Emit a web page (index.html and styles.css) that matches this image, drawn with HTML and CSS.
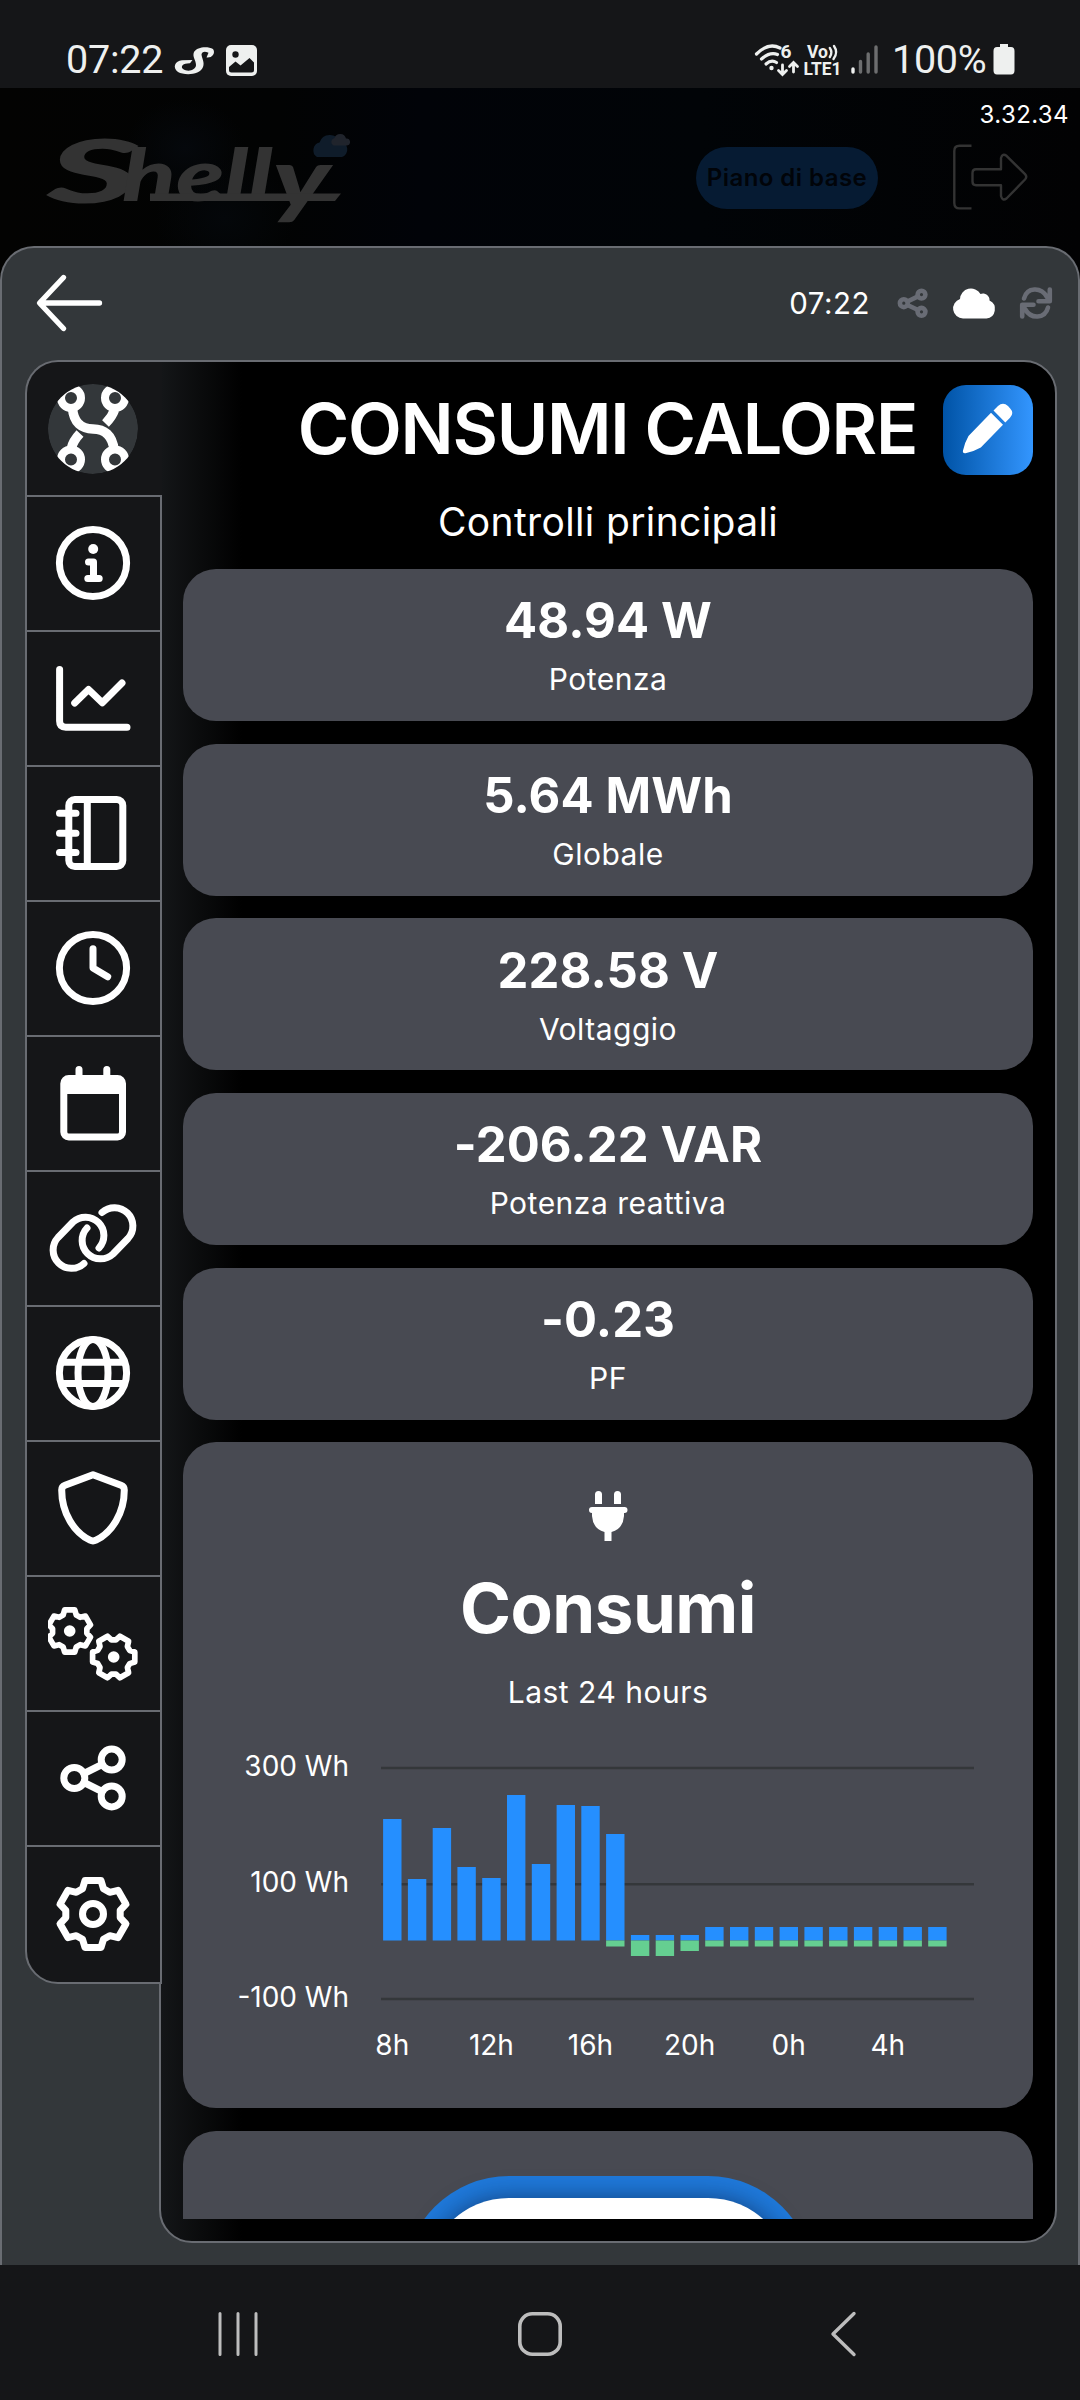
FILE: index.html
```html
<!DOCTYPE html>
<html lang="it">
<head>
<meta charset="utf-8">
<title>Consumi calore</title>
<link rel="stylesheet" href="styles.css">
</head>
<body>
<svg class="defs" width="0" height="0" aria-hidden="true">
  <defs>
    <path id="gear" d="M-10.5-25.3L-8-33.5H8L10.5-25.3L16.7-21.7L25-23.7L33-9.8L27.2-3.6V3.6L33 9.8L25 23.7L16.7 21.7L10.5 25.3L8 33.5H-8L-10.5 25.3L-16.7 21.7L-25 23.7L-33 9.8L-27.2 3.6V-3.6L-33-9.8L-25-23.7L-16.7-21.7Z"/>
    <path id="pill-link" d="M36 70.5A18.4 18.4 0 0 1 10 44.5L25 29A18.4 18.4 0 0 1 51 55"/>
    <clipPath id="disc"><circle cx="45" cy="45" r="45"/></clipPath>
  </defs>
</svg>

<div class="statusbar">
  <span class="status-text clock">07:22</span>
  <svg class="status-left" width="100" height="58" viewBox="170 30 100 58">
    <path d="M213 55Q211 58 206.500 57.500L208.500 52.800Q203 50 201.500 54C201.500 58 205 62 203 67C200 75.500 184 75.500 178 72C172 67.500 175 61 182 60.300L192.500 60L190 63.200C183.500 63 180 66 183 69C188 72.500 196 70 196 65C196 60 192 57 194 52C197 46.500 208 46 213 49Q215 52 213 55Z" fill="#eef0ef"/>
    <rect x="226" y="45" width="31" height="31" rx="5" fill="#eef0ef"/>
    <circle cx="235.500" cy="54.500" r="3.200" fill="#151618"/>
    <path d="M229 67L235.500 61.500L240.500 65.500L249.500 58L254 62.500V70Q254 72.500 251.500 72.500H231.500Q229 72.500 229 70Z" fill="#151618"/>
  </svg>
  <svg class="status-right" width="132" height="58" viewBox="750 30 132 58">
    <g fill="none" stroke="#eef0ef" stroke-width="3.200" stroke-linecap="round">
      <path d="M756.500 54Q768.500 42 780 48"/>
      <path d="M761.500 59Q770 51.500 777.500 54.500"/>
      <path d="M766 64Q771.500 59 776.500 62.500"/>
      <path d="M782.500 65V73.500M778.500 70.500L782.500 74.500L786.500 70.500M793.500 72V63M789.500 66.500L793.500 62.500L797.500 66.500" stroke-width="2.800"/>
      <path d="M829.800 48Q833 52.500 829.800 57M834 46Q838.500 52.500 833.500 59" stroke-width="2.400"/>
    </g>
    <circle cx="771.500" cy="68" r="2.200" fill="#eef0ef"/>
    <g class="status-mini">
      <text x="780.500" y="58" font-size="18" textLength="11" lengthAdjust="spacingAndGlyphs">6</text>
      <text x="807" y="58" font-size="18" textLength="21" lengthAdjust="spacingAndGlyphs">Vo</text>
      <text x="803.500" y="75" font-size="18.500" textLength="38" lengthAdjust="spacingAndGlyphs">LTE1</text>
    </g>
    <g stroke-width="3.400" stroke-linecap="round">
      <path d="M853 69V72" stroke="#eef0ef"/>
      <path d="M860.500 61.500V72M868.200 54V72M876 47V72" stroke="#6d6e6f"/>
    </g>
  </svg>
  <span class="status-text percent">100%</span>
  <svg class="battery" width="22" height="32" viewBox="0 0 22 32"><path d="M7 1H15V4H18Q21.500 4 21.500 8V27.500Q21.500 31.500 18 31.500H4Q.5 31.500 .5 27.500V8Q.5 4 4 4H7Z" fill="#eef0ef"/></svg>
</div>

<header class="header">
  <svg class="brand" width="330" height="152" viewBox="20 96 330 152">
    <g class="brand-text">
      <text x="47" y="203" font-size="87" textLength="92" lengthAdjust="spacingAndGlyphs">S</text>
      <text x="122" y="201" font-size="72" textLength="208" lengthAdjust="spacingAndGlyphs">hell<tspan dy="7" font-size="84">y</tspan></text>
    </g>
    <path d="M150 193.500H341L335 201H150Z" fill="#333"/>
    <path d="M317 157A8 8 0 0 1 319.500 142.500A11 11 0 0 1 340 141.500A8 8 0 0 1 342 157Z" fill="#0f1c2a"/>
    <path d="M333.500 145.500A4 4 0 0 1 334.500 138A6 6 0 0 1 346 138.500A3.500 3.500 0 0 1 347 145.500Z" fill="#20242c"/>
  </svg>
  <span class="plan">Piano di base</span>
  <svg class="exit" width="80" height="72" viewBox="950 141 80 72" fill="none" stroke="#333" stroke-width="2.400" stroke-linejoin="round">
    <path d="M971.500 145.800H959.500Q954.300 145.800 954.300 151V203Q954.300 208.400 959.500 208.400H971.500"/>
    <path d="M976 169.200H1001V158Q1002.500 153 1006.500 155.800L1025 174.200Q1027.500 176.800 1025 179.500L1006.500 198.500Q1002.500 201.500 1001 196V185.200H976Q972.500 185.200 972.500 181.500V173Q972.500 169.200 976 169.200Z"/>
  </svg>
  <span class="version">3.32.34</span>
</header>

<main class="modal">
  <div class="topbar">
    <svg class="back" width="72" height="64" viewBox="34 271 72 64" fill="none" stroke="#fff" stroke-width="5.300" stroke-linecap="round" stroke-linejoin="round"><path d="M63.500 277.500L39.500 303L63.500 328.500M41 303H99.500"/></svg>
    <span class="time">07:22</span>
    <svg class="signals" width="160" height="40" viewBox="895 283 160 40" fill="none" stroke="#696c75" stroke-width="4.600">
      <circle cx="903.800" cy="303.200" r="3.900"/><circle cx="921.500" cy="294.600" r="3.900"/><circle cx="921.500" cy="311.800" r="3.900"/>
      <path d="M908 301.200L917.500 296.600M908 305.200L917.500 309.800"/>
      <path d="M963 318.500A10 10 0 0 1 960 299A11 11 0 0 1 980.500 294A6.500 6.500 0 0 1 989.500 300.500A9.500 9.500 0 0 1 986.500 318.500Z" fill="#fff" stroke="none"/>
      <g stroke-linecap="round" stroke-linejoin="round">
        <path d="M1024 298.500C1027 287 1041 286.500 1047 297M1049.800 289.500V301.200H1038.500"/>
        <path d="M1048 307.500C1045 319 1031 319.500 1025 309M1022.200 316.500V304.800H1033.500"/>
      </g>
    </svg>
  </div>

  <div class="workspace">
    <nav class="sidebar">
      <div class="tab tab-active"><svg viewBox="0 0 90 90"><g clip-path="url(#disc)"><circle cx="45" cy="45" r="45" fill="#33373a"/><g fill="none" stroke="#fff" stroke-width="8"><circle cx="23" cy="14" r="10"/><circle cx="67" cy="14" r="10"/><circle cx="23" cy="75.500" r="10"/><circle cx="67" cy="75.500" r="10"/><path d="M24.500 24C25.500 39 34 45 45 45S64.500 51 66 66M66.500 26Q64 33 57.500 39.500M23.500 64Q25 57 32 49.500" stroke-width="9.500"/></g></g></svg></div>
      <div class="tab"><svg class="line-icon" viewBox="0 0 90 90"><circle cx="45" cy="45" r="33.600"/><path d="M40.500 44H45.500V60.500M39.800 60.500H51.200"/><circle cx="45.200" cy="31" r="5" fill="#fff" stroke="none"/></svg></div>
      <div class="tab"><svg class="line-icon" viewBox="0 0 90 90"><path d="M11.600 16.400V68Q11.600 74.200 17.800 74.200H79M26.700 50L40.500 36.500L54.300 49.800L74 30"/></svg></div>
      <div class="tab"><svg class="line-icon" viewBox="0 0 90 90"><rect x="20.800" y="11.500" width="54" height="67" rx="6"/><path d="M39.300 12V78M11.500 25.300H28M11.500 45.200H28M11.500 64.400H28"/></svg></div>
      <div class="tab"><svg class="line-icon" viewBox="0 0 90 90"><circle cx="45" cy="45" r="33.600"/><path d="M45 25.700V45L59.700 53.800"/></svg></div>
      <div class="tab"><svg class="line-icon" viewBox="0 0 90 90"><rect x="15.800" y="20.500" width="58.700" height="58.500" rx="5"/><path d="M15.800 24H74.500V36H15.800Z" fill="#fff" stroke="none"/><path d="M31 11.500V22M58.800 11.500V22"/></svg></div>
      <div class="tab"><svg class="line-icon" viewBox="0 0 90 90"><use href="#pill-link"/><use href="#pill-link" transform="rotate(180 45 45)"/></svg></div>
      <div class="tab"><svg class="line-icon" viewBox="0 0 90 90"><circle cx="45" cy="45" r="33.600"/><ellipse cx="45" cy="45" rx="15" ry="33.600"/><path d="M14 34.300H76M14 55.600H76"/></svg></div>
      <div class="tab"><svg class="line-icon" viewBox="0 0 90 90"><path d="M45 11.700L73 22.300Q76.300 23.500 76.300 27C76.300 50 64 69.500 48 77.200Q45 78.600 42 77.200C26 69.500 13.700 50 13.700 27Q13.700 23.500 17 22.300Z"/></svg></div>
      <div class="tab"><svg class="line-icon gears" viewBox="0 0 90 90"><use href="#gear" transform="translate(21.700 33) scale(.63)" stroke-width="9"/><use href="#gear" transform="translate(65.700 59) rotate(30) scale(.63)" stroke-width="9"/><g fill="#fff" stroke="none"><circle cx="21.700" cy="33" r="5.800"/><circle cx="65.700" cy="59" r="5.800"/></g></svg></div>
      <div class="tab"><svg class="line-icon" viewBox="0 0 90 90"><circle cx="26.300" cy="45" r="10.500"/><circle cx="63.700" cy="26.600" r="10.500"/><circle cx="63.700" cy="63.400" r="10.500"/><path d="M36 40.500L54 31.500M36 49.500L54 58.500"/></svg></div>
      <div class="tab tab-last"><svg class="line-icon" viewBox="0 0 90 90"><use href="#gear" transform="translate(45 45)"/><circle cx="45" cy="45" r="10.500"/></svg></div>
    </nav>

    <section class="panel">
      <div class="title-row">
        <h1 class="title">CONSUMI CALORE</h1>
        <div class="edit"><svg width="90" height="90" viewBox="0 0 90 90" fill="#fff"><path d="M48 27.700L60 39.700L37.800 62.500Q31 66.500 22.500 68.200Q19.300 68.500 20 65.500Q21.500 58 25.500 51Z"/><path d="M50.500 25.500L55 21Q60 16.500 65 21L67.200 23.500Q71.500 28 67 32.800L62.300 37.500Z"/></svg></div>
      </div>
      <p class="subtitle">Controlli principali</p>
      <div class="cards">
        <div class="card"><strong class="value">48.94 W</strong><span class="label">Potenza</span></div>
        <div class="card"><strong class="value">5.64 MWh</strong><span class="label">Globale</span></div>
        <div class="card"><strong class="value">228.58 V</strong><span class="label">Voltaggio</span></div>
        <div class="card"><strong class="value">-206.22 VAR</strong><span class="label">Potenza reattiva</span></div>
        <div class="card"><strong class="value">-0.23</strong><span class="label">PF</span></div>
        <div class="card chart-card">
          <svg class="plug" width="40" height="50" viewBox="588 1491 40 50" fill="#fff"><path d="M595 1504V1494.500A3.500 3.500 0 0 1 602 1494.500V1504ZM614 1504V1494.500A3.500 3.500 0 0 1 621 1494.500V1504ZM592 1507H624.500A3 3 0 0 1 624.500 1513H624V1516Q623 1529 611.500 1532V1541H604.500V1532Q593 1529 592 1516V1513A3 3 0 0 1 592 1507Z"/></svg>
          <h2 class="chart-title">Consumi</h2>
          <p class="chart-sub">Last 24 hours</p>
          <svg class="chart" width="850" height="397" viewBox="183 1710 850 397">
            <path d="M381 1768H974M381 1884.300H974M381 1999H974" stroke="#34373a" stroke-width="2.600"/>
            <g fill="#258fff">
              <rect x="383.100" y="1819" width="18.400" height="121.500"/>
              <rect x="407.900" y="1879" width="18.400" height="61.500"/>
              <rect x="432.700" y="1828" width="18.400" height="112.500"/>
              <rect x="457.400" y="1867" width="18.400" height="73.500"/>
              <rect x="482.200" y="1878" width="18.400" height="62.500"/>
              <rect x="507" y="1795" width="18.400" height="145.500"/>
              <rect x="531.800" y="1864" width="18.400" height="76.500"/>
              <rect x="556.600" y="1805" width="18.400" height="135.500"/>
              <rect x="581.300" y="1806" width="18.400" height="134.500"/>
              <rect x="606.100" y="1834" width="18.400" height="106.500"/>
              <rect x="630.900" y="1935" width="18.400" height="5.500"/>
              <rect x="655.700" y="1935" width="18.400" height="5.500"/>
              <rect x="680.500" y="1935" width="18.400" height="5.500"/>
              <rect x="705.200" y="1927" width="18.400" height="13.500"/>
              <rect x="730" y="1927" width="18.400" height="13.500"/>
              <rect x="754.800" y="1927" width="18.400" height="13.500"/>
              <rect x="779.600" y="1927" width="18.400" height="13.500"/>
              <rect x="804.400" y="1927" width="18.400" height="13.500"/>
              <rect x="829.100" y="1927" width="18.400" height="13.500"/>
              <rect x="853.900" y="1927" width="18.400" height="13.500"/>
              <rect x="878.700" y="1927" width="18.400" height="13.500"/>
              <rect x="903.500" y="1927" width="18.400" height="13.500"/>
              <rect x="928.200" y="1927" width="18.400" height="13.500"/>
            </g>
            <g fill="#65cf91">
              <rect x="606.100" y="1940.500" width="18.400" height="6"/>
              <rect x="630.900" y="1940.500" width="18.400" height="15.500"/>
              <rect x="655.700" y="1940.500" width="18.400" height="15.500"/>
              <rect x="680.500" y="1940.500" width="18.400" height="10.500"/>
              <rect x="705.200" y="1940.500" width="18.400" height="6"/>
              <rect x="730" y="1940.500" width="18.400" height="6"/>
              <rect x="754.800" y="1940.500" width="18.400" height="6"/>
              <rect x="779.600" y="1940.500" width="18.400" height="6"/>
              <rect x="804.400" y="1940.500" width="18.400" height="6"/>
              <rect x="829.100" y="1940.500" width="18.400" height="6"/>
              <rect x="853.900" y="1940.500" width="18.400" height="6"/>
              <rect x="878.700" y="1940.500" width="18.400" height="6"/>
              <rect x="903.500" y="1940.500" width="18.400" height="6"/>
              <rect x="928.200" y="1940.500" width="18.400" height="6"/>
            </g>
            <g class="axis axis-y">
              <text x="349" y="1775.500">300 Wh</text>
              <text x="349" y="1891.500">100 Wh</text>
              <text x="349" y="2007">-100 Wh</text>
            </g>
            <g class="axis axis-x">
              <text x="392.300" y="2055">8h</text>
              <text x="491.400" y="2055">12h</text>
              <text x="590.500" y="2055">16h</text>
              <text x="689.600" y="2055">20h</text>
              <text x="788.700" y="2055">0h</text>
              <text x="887.800" y="2055">4h</text>
            </g>
          </svg>
        </div>
        <div class="card power-card"><div class="power"><div class="power-face"></div></div></div>
      </div>
    </section>
  </div>
</main>

<footer class="navbar">
  <svg width="46" height="52" viewBox="215 2308 46 52" fill="none" stroke="#bdbdbd" stroke-width="3" stroke-linecap="round"><path d="M220 2313.500V2354.500M238 2313.500V2354.500M256 2313.500V2354.500"/></svg>
  <svg width="52" height="52" viewBox="514 2308 52 52" fill="none" stroke="#bdbdbd" stroke-width="3.600"><rect x="519.800" y="2313.800" width="40.400" height="40.400" rx="12.500"/></svg>
  <svg width="32" height="52" viewBox="827 2308 32 52" fill="none" stroke="#bdbdbd" stroke-width="3.400" stroke-linecap="round" stroke-linejoin="round"><path d="M854 2313.500L833 2334L854 2354.500"/></svg>
</footer>
</body>
</html>
```
FILE: styles.css
```css
* { box-sizing: border-box; }

body {
  margin: 0;
  width: 1080px;
  height: 2400px;
  display: flex;
  flex-direction: column;
  overflow: hidden;
  background: #000;
  color: #fff;
  font-family: Inter, "Liberation Sans", sans-serif;
}

h1, h2, p { margin: 0; }
svg { display: block; flex: none; }
.defs { position: absolute; }

/* System status bar */
.statusbar {
  flex: none;
  height: 88px;
  display: flex;
  align-items: flex-end;
  background: #151618;
  padding-left: 66px;
}
.status-text {
  font: 400 39.5px/57px Roboto, "Liberation Sans", sans-serif;
  color: #eef0ef;
}
.clock { width: 104px; letter-spacing: -.2px; white-space: nowrap; }
.status-right { margin-left: 480px; }
.percent { margin-left: 10px; width: 99px; letter-spacing: -.3px; white-space: nowrap; }
.battery { margin: 0 0 13px 2px; }
.status-mini {
  font-family: Roboto, sans-serif;
  font-weight: 700;
  fill: #eef0ef;
}

/* Dimmed application header */
.header {
  position: relative;
  flex: none;
  height: 192px;
  margin-bottom: -34px;
  display: flex;
  align-items: flex-start;
  padding-left: 20px;
  background:
    radial-gradient(ellipse 60px 50px at 185px 60px, #05080c, transparent),
    radial-gradient(ellipse 70px 60px at 225px 130px, #04070a, transparent),
    linear-gradient(90deg, #030302 0, #020303 280px, #010308 420px, #010407 700px, #020203 1080px);
}
.brand { margin-top: 8px; }
.brand-text {
  font-family: Lato, sans-serif;
  font-weight: 900;
  font-style: italic;
  fill: #333;
}
.plan {
  width: 182px;
  height: 62px;
  margin: 59px 0 0 346px;
  border-radius: 31px;
  background: #061b33;
  color: #010409;
  font-size: 24px;
  font-weight: 600;
  letter-spacing: .45px;
  line-height: 62px;
  text-align: center;
  white-space: nowrap;
}
.exit { margin: 53px 0 0 72px; }
.version {
  position: absolute;
  top: 10px;
  right: 11px;
  font-size: 24px;
  letter-spacing: .4px;
  line-height: 34px;
}

/* Device sheet */
.modal {
  position: relative;
  flex: none;
  height: 2019px;
  display: flex;
  flex-direction: column;
  background: #33373a;
  border: 2px solid #696c72;
  border-bottom: 0;
  border-radius: 34px 34px 0 0;
}
.topbar {
  height: 112px;
  display: flex;
  align-items: center;
  padding: 0 23px 2px 32px;
}
.time { margin: 0 25px 0 auto; font-size: 29.5px; letter-spacing: .5px; }
.workspace {
  display: flex;
  align-items: flex-start;
  padding: 0 21px 0 23px;
}

.sidebar { position: relative; z-index: 1; width: 137px; flex: none; }
.tab {
  height: 135px;
  display: flex;
  align-items: center;
  justify-content: center;
  background: #151618;
  border: 2px solid #696c72;
  border-bottom: 0;
}
.tab svg { width: 90px; height: 90px; margin: -1px 0 0 -1px; }
.tab .gears { margin-left: -2px; }
.tab-active {
  height: 135.3px;
  border-right: 0;
  border-radius: 33px 0 0 0;
}
.tab-active svg { margin: 0 4px 0 0; }
.tab-last {
  height: 138.5px;
  border-bottom: 2px solid #696c72;
  border-radius: 0 0 0 33px;
}
.tab-last svg { margin-top: -2px; }
.line-icon {
  fill: none;
  stroke: #fff;
  stroke-width: 7;
  stroke-linecap: round;
  stroke-linejoin: round;
}

.panel {
  flex: 1;
  min-width: 0;
  height: 1883px;
  margin-left: -3px;
  padding: 23px 22px 22px;
  display: flex;
  flex-direction: column;
  border: 2px solid #696c72;
  border-radius: 0 33px 33px 33px;
  background: linear-gradient(90deg, #141618 0, #000 81px);
}
.title-row {
  flex: none;
  height: 90px;
  display: flex;
  align-items: center;
  justify-content: flex-end;
}
.title {
  padding-bottom: 4px;
  margin-right: 26px;
  font-size: 70px;
  font-weight: 600;
  letter-spacing: -1.3px;
  line-height: 85px;
  white-space: nowrap;
}
.edit {
  width: 90px;
  height: 90px;
  border-radius: 23px;
  background: linear-gradient(90deg, #0053a6, #3396ff);
}
.subtitle {
  flex: none;
  height: 94px;
  font-size: 39px;
  letter-spacing: .36px;
  line-height: 93px;
  text-align: center;
}
.cards {
  flex: 1;
  min-height: 0;
  display: flex;
  flex-direction: column;
  gap: 22.7px;
  overflow: hidden;
}
.card {
  flex: none;
  height: 152px;
  padding-top: 22.4px;
  display: flex;
  flex-direction: column;
  align-items: center;
  border-radius: 33px;
  background: #484a52;
}
.value { font-size: 49px; font-weight: 700; letter-spacing: .1px; line-height: 60px; }
.label { font-size: 30px; letter-spacing: .5px; line-height: 56px; }

.chart-card { height: 666px; padding-top: 49px; }
.chart-title { font-size: 69px; font-weight: 700; letter-spacing: -.5px; line-height: 134px; }
.chart-sub { font-size: 30px; letter-spacing: .5px; line-height: 35px; }
.axis { font-size: 28px; fill: #fff; }
.axis-y { text-anchor: end; }
.axis-x { text-anchor: middle; }

.power-card { height: 500px; padding-top: 45px; }
.power {
  width: 409px;
  height: 409px;
  padding: 22px;
  border-radius: 105px;
  background: #1f79da;
}
.power-face {
  height: 365px;
  border-radius: 83px;
  background: #fff;
  box-shadow: 0 0 24px rgba(8, 20, 50, .55);
}

/* System navigation */
.navbar {
  flex: none;
  height: 135px;
  display: flex;
  align-items: flex-start;
  gap: 253px;
  padding: 43px 0 0 215px;
  background: #151618;
}
.navbar svg:last-child { margin-left: 8px; }
```
